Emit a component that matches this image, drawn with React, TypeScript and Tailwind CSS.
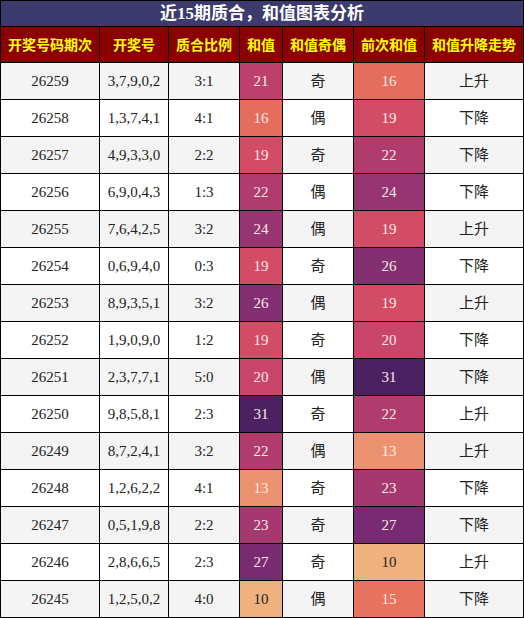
import React from 'react'

type Row = {
  issue: string
  nums: string
  ratio: string
  sum: number
  parity: string
  prev: number
  trend: string
}

const rows: Row[] = [
  { issue: '26259', nums: '3,7,9,0,2', ratio: '3:1', sum: 21, parity: '奇', prev: 16, trend: '上升' },
  { issue: '26258', nums: '1,3,7,4,1', ratio: '4:1', sum: 16, parity: '偶', prev: 19, trend: '下降' },
  { issue: '26257', nums: '4,9,3,3,0', ratio: '2:2', sum: 19, parity: '奇', prev: 22, trend: '下降' },
  { issue: '26256', nums: '6,9,0,4,3', ratio: '1:3', sum: 22, parity: '偶', prev: 24, trend: '下降' },
  { issue: '26255', nums: '7,6,4,2,5', ratio: '3:2', sum: 24, parity: '偶', prev: 19, trend: '上升' },
  { issue: '26254', nums: '0,6,9,4,0', ratio: '0:3', sum: 19, parity: '奇', prev: 26, trend: '下降' },
  { issue: '26253', nums: '8,9,3,5,1', ratio: '3:2', sum: 26, parity: '偶', prev: 19, trend: '上升' },
  { issue: '26252', nums: '1,9,0,9,0', ratio: '1:2', sum: 19, parity: '奇', prev: 20, trend: '下降' },
  { issue: '26251', nums: '2,3,7,7,1', ratio: '5:0', sum: 20, parity: '偶', prev: 31, trend: '下降' },
  { issue: '26250', nums: '9,8,5,8,1', ratio: '2:3', sum: 31, parity: '奇', prev: 22, trend: '上升' },
  { issue: '26249', nums: '8,7,2,4,1', ratio: '3:2', sum: 22, parity: '偶', prev: 13, trend: '上升' },
  { issue: '26248', nums: '1,2,6,2,2', ratio: '4:1', sum: 13, parity: '奇', prev: 23, trend: '下降' },
  { issue: '26247', nums: '0,5,1,9,8', ratio: '2:2', sum: 23, parity: '奇', prev: 27, trend: '下降' },
  { issue: '26246', nums: '2,8,6,6,5', ratio: '2:3', sum: 27, parity: '奇', prev: 10, trend: '上升' },
  { issue: '26245', nums: '1,2,5,0,2', ratio: '4:0', sum: 10, parity: '偶', prev: 15, trend: '下降' },
]

const headers = ['开奖号码期次', '开奖号', '质合比例', '和值', '和值奇偶', '前次和值', '和值升降走势']

// heat colours for the sum values
const heat: Record<number, string> = {
  10: 'bg-[#efb27f] text-[#222222]',
  13: 'bg-[#eb9370] text-[#fbe9e4]',
  15: 'bg-[#e7735f] text-[#fbe9e4]',
  16: 'bg-[#e46d5e] text-[#fbe9e4]',
  19: 'bg-[#d34c66] text-[#fbe9e4]',
  20: 'bg-[#ca456a] text-[#fbe9e4]',
  21: 'bg-[#bc3f6c] text-[#fbe9e4]',
  22: 'bg-[#b03b6d] text-[#fbe9e4]',
  23: 'bg-[#a5386f] text-[#fbe9e4]',
  24: 'bg-[#973572] text-[#fbe9e4]',
  26: 'bg-[#832f72] text-[#fbe9e4]',
  27: 'bg-[#782b71] text-[#fbe9e4]',
  31: 'bg-[#4b2162] text-[#fbe9e4]',
}

const font = "font-['Liberation_Serif','Noto_Sans_CJK_SC',serif]"

export default function App() {
  return (
    <div className="w-[524px] h-[618px] bg-white">
      <div className={`grid grid-cols-[98px_68px_70px_42px_70px_70px_98px] gap-px bg-black p-px ${font}`}>
        <div className="col-span-7 h-[25px] bg-[#3b3b6d] flex items-center justify-center text-white font-bold text-[17px]">
          近15期质合，和值图表分析
        </div>
        {headers.map((h) => (
          <div
            key={h}
            className="h-[35px] bg-[#8b0000] flex items-center justify-center text-[#ffff00] font-bold text-[14px] font-['Noto_Sans_CJK_SC',sans-serif]"
          >
            {h}
          </div>
        ))}
        {rows.map((r, i) => {
          const bg = i % 2 === 0 ? 'bg-[#f4f4f4]' : 'bg-white'
          const cell = 'h-[36px] flex items-center justify-center text-[15px]'
          return (
            <React.Fragment key={r.issue}>
              <div className={`${cell} ${bg} text-[#222222]`}>{r.issue}</div>
              <div className={`${cell} ${bg} text-[#222222]`}>{r.nums}</div>
              <div className={`${cell} ${bg} text-[#222222]`}>{r.ratio}</div>
              <div className={`${cell} ${heat[r.sum]}`}>{r.sum}</div>
              <div className={`${cell} ${bg} text-[#222222]`}>{r.parity}</div>
              <div className={`${cell} ${heat[r.prev]}`}>{r.prev}</div>
              <div className={`${cell} ${bg} text-[#222222]`}>{r.trend}</div>
            </React.Fragment>
          )
        })}
      </div>
    </div>
  )
}
